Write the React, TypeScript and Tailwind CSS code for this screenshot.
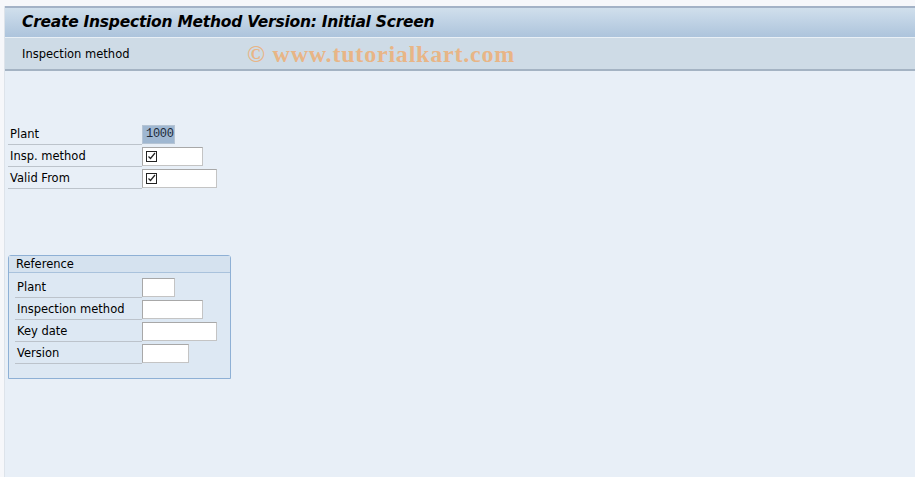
import React from 'react'

const font = { fontFamily: '"DejaVu Sans", "Liberation Sans", sans-serif' }

function CheckIcon() {
  return (
    <svg width="11" height="11" viewBox="0 0 11 11" className="block">
      <rect x="0.5" y="0.5" width="10" height="10" fill="white" stroke="#222" strokeWidth="1" />
      <path d="M2.5 5.5 L4.5 7.5 L9 2" fill="none" stroke="#222" strokeWidth="1.2" />
    </svg>
  )
}

function Field({ w, value, check, selected }: { w: string; value?: string; check?: boolean; selected?: boolean }) {
  return (
    <div
      className={`${w} h-[19px] flex items-center pl-[3px] border ${
        selected ? 'bg-[#9fb7d1] border-[#b5c4d4]' : 'bg-white border-[#c4c4c4] border-t-[#a8a8a8] border-l-[#a8a8a8]'
      }`}
    >
      {check && <CheckIcon />}
      {value && <span className="text-[12px] text-[#1c2a3a] font-['Liberation_Mono',monospace] tracking-[-0.3px]">{value}</span>}
    </div>
  )
}

function Row({ label, labelW, children }: { label: string; labelW: string; children: React.ReactNode }) {
  return (
    <div className="flex items-end h-[22px]">
      <div className={`${labelW} h-full flex items-center pt-[2px] border-b border-[#bcc3cb] text-[11.5px] text-black pl-[2px] leading-none`}>
        {label}
      </div>
      <div className="self-center">{children}</div>
    </div>
  )
}

export default function App() {
  return (
    <div className="w-[915px] h-[477px] bg-[#f6f7fa] pt-[6px] pl-[4px] overflow-hidden" style={font}>
      <div className="h-full border-l border-[#dde3ea] bg-[#e8eff7] flex flex-col">
        {/* Title bar */}
        <div className="h-[31px] border-t-2 border-[#a3b2c6] bg-gradient-to-b from-[#d0dfec] to-[#adc4dc] flex items-center pl-[17px]">
          <span className="text-[15.5px] font-bold italic text-black tracking-[-0.25px]">
            Create Inspection Method Version: Initial Screen
          </span>
        </div>
        {/* Toolbar */}
        <div className="h-[34px] border-t border-[#e9f0f6] border-b-2 border-b-[#a4b3c3] bg-[#cedbe6] flex items-center pl-[17px]">
          <span className="w-[225px] pt-[2px] text-[11.5px] text-black">Inspection method</span>
          <span className="text-[24px] leading-none font-bold text-[#e8b586] font-['Liberation_Serif',serif] tracking-[0.8px]">© www.tutorialkart.com</span>
        </div>

        {/* Main area */}
        <div className="flex-1 pl-[3px] pt-[52px]">
          <Row label="Plant" labelW="w-[134px]">
            <Field w="w-[33px]" value="1000" selected />
          </Row>
          <Row label="Insp. method" labelW="w-[134px]">
            <Field w="w-[61px]" check />
          </Row>
          <Row label="Valid From" labelW="w-[134px]">
            <Field w="w-[75px]" check />
          </Row>

          {/* Reference group */}
          <div className="mt-[66px] w-[223px] h-[124px] border border-[#8eb0d5] rounded-t-[3px] bg-[#dde8f3]">
            <div className="h-[17px] pt-[2px] border-b border-[#a9c2dc] bg-[#d5e2ef] text-[11.5px] text-black pl-[7px] flex items-center">
              Reference
            </div>
            <div className="pl-[6px] pt-[3px]">
              <Row label="Plant" labelW="w-[127px]">
                <Field w="w-[33px]" />
              </Row>
              <Row label="Inspection method" labelW="w-[127px]">
                <Field w="w-[61px]" />
              </Row>
              <Row label="Key date" labelW="w-[127px]">
                <Field w="w-[75px]" />
              </Row>
              <Row label="Version" labelW="w-[127px]">
                <Field w="w-[47px]" />
              </Row>
            </div>
          </div>
        </div>
      </div>
    </div>
  )
}
